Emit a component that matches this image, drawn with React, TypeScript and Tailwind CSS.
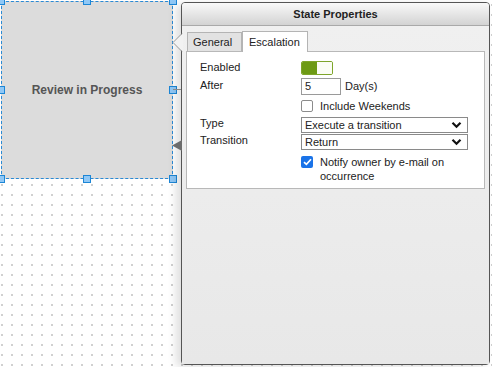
import React from "react";

const font = { fontFamily: '"Liberation Sans", Arial, sans-serif' };

const Handle: React.FC<{ className: string }> = ({ className }) => (
  <span
    className={`absolute h-[8px] w-[8px] border border-[#1c86d6] bg-[#90c8f6] ${className}`}
  />
);

const Chevron = () => (
  <svg width="11" height="8" viewBox="0 0 11 8" className="mr-[5px]">
    <path d="M1.5 1.8 L5.5 5.8 L9.5 1.8" fill="none" stroke="#111" strokeWidth="2.2" />
  </svg>
);

const Select: React.FC<{ value: string }> = ({ value }) => (
  <div className="flex h-[16px] w-[167px] items-center justify-between border border-[#8a8a8a] bg-white pl-[3px] text-[11px] text-[#222]">
    <span>{value}</span>
    <Chevron />
  </div>
);

const Label: React.FC<{ children: React.ReactNode; lift?: string }> = ({ children, lift = "mb-[2px]" }) => (
  <div className={`w-[101px] text-[11px] leading-[13px] text-[#222] ${lift}`}>{children}</div>
);

export default function App() {
  return (
    <div
      className="relative flex h-[367px] w-[492px] items-start overflow-hidden bg-white bg-[radial-gradient(circle,#cfcfcf_0.7px,transparent_1.1px)] bg-[length:10px_10px] bg-[position:-3px_0px]"
      style={font}
    >
      {/* state node */}
      <div className="relative ml-[1px] mt-[1px] flex h-[178px] w-[172px] items-center justify-center border border-dashed border-[#2a8ad4] bg-[#dcdcdc]">
        <span className="text-[12px] font-bold text-[#555]">Review in Progress</span>
        <Handle className="left-[-5px] top-[-5px]" />
        <Handle className="left-[81px] top-[-5px]" />
        <Handle className="right-[-5px] top-[-5px]" />
        <Handle className="left-[-5px] top-[84px]" />
        <Handle className="right-[-5px] top-[84px]" />
        <Handle className="bottom-[-5px] left-[-5px]" />
        <Handle className="bottom-[-5px] left-[81px]" />
        <Handle className="bottom-[-5px] right-[-5px]" />
      </div>

      {/* properties panel */}
      <div className="relative ml-[8px] mt-[2px] flex h-[363px] w-[309px] flex-col rounded-[4px] border border-[#555] bg-[#ececec] shadow-[-5px_2px_8px_rgba(0,0,0,0.13)]">
        <div className="absolute left-[-9px] top-[86px] h-[1px] w-[8px] bg-[#8a8a8a]" />
        <svg width="11" height="20" viewBox="0 0 11 20" className="absolute left-[-10px] top-[30px]">
          <polygon points="11,0 1,9.5 11,19" fill="#f2f2f2" />
          <polyline points="10,0.5 1,9.5 10,18.5" fill="none" stroke="#9a9a9a" strokeWidth="1" />
        </svg>
        <svg width="10" height="11" viewBox="0 0 10 11" className="absolute left-[-10px] top-[137px]">
          <polygon points="10,0 0,5.5 10,11" fill="#6c6c6c" />
        </svg>

        <div className="flex h-[23px] items-center justify-center rounded-t-[3px] border-b border-[#a9a9a9] bg-gradient-to-b from-[#f9f9f9] to-[#d3d3d3] text-[11px] font-bold text-[#222]">
          State Properties
        </div>

        <div className="flex flex-1 flex-col bg-gradient-to-b from-[#f0f0f0] to-[#e8e8e8] px-[4px] pt-[5px]">
          <div className="flex h-[20px] items-end pl-[1px]">
            <div className="flex h-[19px] w-[55px] items-center border border-b-0 border-[#b4b4b4] bg-[#e2e2e2] pl-[5px] text-[11px] text-[#222]">
              General
            </div>
            <div className="relative z-10 mb-[-1px] flex h-[21px] w-[66px] items-center border border-b-0 border-[#b4b4b4] bg-white pl-[6px] text-[11px] text-[#222]">
              Escalation
            </div>
          </div>

          <div className="flex h-[138px] w-[299px] flex-col border border-[#b8b8b8] bg-white pl-[13px] pt-[9px]">
            <div className="flex h-[14px] items-center">
              <Label>Enabled</Label>
              <div className="flex h-[14px] w-[32px] overflow-hidden rounded-[2px] border border-[#7ea52a]">
                <div className="w-[15px] bg-[#6d9a14]" />
                <div className="flex-1 bg-[#fbfdf5]" />
              </div>
            </div>

            <div className="mt-[3px] flex h-[16px] items-center">
              <Label>After</Label>
              <div className="flex h-[17px] w-[40px] items-center border border-[#9a9a9a] bg-white pl-[3px] text-[11px] text-[#222]">
                5
              </div>
              <span className="ml-[4px] text-[11px] text-[#222]">Day(s)</span>
            </div>

            <div className="mt-[6px] flex h-[12px] items-center pl-[101px]">
              <div className="h-[12px] w-[12px] rounded-[2px] border border-[#8c8c8c] bg-white" />
              <span className="ml-[7px] text-[11px] text-[#222]">Include Weekends</span>
            </div>

            <div className="mt-[5px] flex h-[16px] items-center">
              <Label lift="mb-[4px]">Type</Label>
              <Select value="Execute a transition" />
            </div>

            <div className="mt-[1px] flex h-[16px] items-center">
              <Label lift="mb-[4px]">Transition</Label>
              <Select value="Return" />
            </div>

            <div className="mt-[6px] flex items-start pl-[101px]">
              <div className="flex h-[12px] w-[12px] shrink-0 items-center justify-center rounded-[2px] bg-[#1a73e8]">
                <svg width="9" height="8" viewBox="0 0 9 8">
                  <path d="M1 4.2 L3.4 6.4 L8 1.3" fill="none" stroke="white" strokeWidth="1.7" />
                </svg>
              </div>
              <span className="ml-[7px] mt-[-1px] w-[140px] text-[11px] leading-[14px] text-[#222]">
                Notify owner by e-mail on occurrence
              </span>
            </div>
          </div>
        </div>
      </div>
    </div>
  );
}
